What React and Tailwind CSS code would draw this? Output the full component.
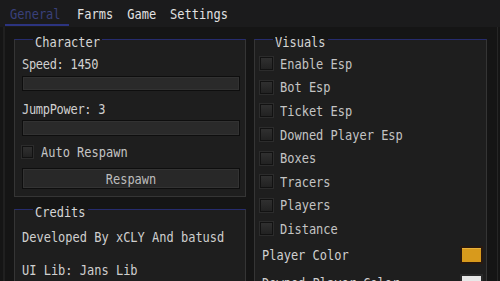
import React from "react";

const T = ({ children, className = "" }) => (
  <span className={"inline-block origin-center scale-y-[1.22] " + className}>{children}</span>
);

const Check = ({ size = "w-[13px] h-[13px]" }) => (
  <div className={size + " shrink-0 border border-[#121212] bg-[linear-gradient(#303030,#222222)] shadow-[0_0_0_1px_#2c2c2c]"} />
);

const Panel = ({ title, className = "", children }) => (
  <div className={"relative border border-[#353535] border-t-[#262c6e] bg-[#1e1e1e] " + className}>
    <div className="absolute -top-[6px] left-[18px] px-[2px] h-[16px] leading-[16px] text-[#d6d6d6] bg-[linear-gradient(to_bottom,#151515_37%,#1e1e1e_37%)]">
      <T>{title}</T>
    </div>
    {children}
  </div>
);

const Slider = ({ className = "" }) => (
  <div className={"ml-[7px] mr-[5px] border border-[#0e0e0e] bg-[#2a2a2a] shadow-[inset_0_0_0_1px_#323232] " + className} />
);

const CheckRow = ({ label }) => (
  <div className="h-[23.6px] flex items-center pl-[5px] gap-[7px]">
    <Check />
    <span className="leading-[16px] text-[#c4c4c4]"><T>{label}</T></span>
  </div>
);

export default function App() {
  return (
    <div
      className="w-[500px] h-[281px] overflow-hidden bg-[#151515] text-[12px] flex flex-col"
      style={{ fontFamily: '"DejaVu Sans Mono", monospace' }}
    >
      <div className="h-[27px] shrink-0 bg-[#1b1b1c] flex items-start relative">
        <div className="relative ml-[10px] h-full flex items-center text-[#39407a]">
          <T>General</T>
          <div className="absolute left-[-5px] right-[-8px] bottom-[1px] h-[2px] bg-[#2c3480]" />
        </div>
        <div className="ml-[16.5px] h-full flex items-center text-[#e2e2e2]"><T>Farms</T></div>
        <div className="ml-[14px] h-full flex items-center text-[#e2e2e2]"><T>Game</T></div>
        <div className="ml-[14px] h-full flex items-center text-[#e2e2e2]"><T>Settings</T></div>
      </div>
      <div className="flex-1 flex gap-[8px] ml-[3px] pl-[9px] border-l-2 border-[#202020]">
        <div className="w-[232px] flex flex-col">
          <Panel title="Character" className="mt-[12px] flex flex-col pb-[7px]">
            <div className="mt-[16px] pl-[7px] h-[16px] leading-[16px] tracking-[-0.3px] text-[#d0d0d0]"><T>Speed: 1450</T></div>
            <Slider className="mt-[4px] h-[15px]" />
            <div className="mt-[10px] pl-[7px] h-[16px] leading-[16px] tracking-[-0.3px] text-[#d0d0d0]"><T>JumpPower: 3</T></div>
            <Slider className="mt-[3px] h-[16px]" />
            <div className="mt-[8px] pl-[7px] h-[16px] flex items-center gap-[8px]">
              <Check size="w-[11px] h-[12px]" />
              <span className="leading-[16px] text-[#c4c4c4]"><T>Auto Respawn</T></span>
            </div>
            <div className="mt-[8px] ml-[7px] mr-[5px] h-[21px] flex items-center justify-center border border-[#0e0e0e] bg-[#282828] shadow-[inset_0_0_0_1px_#333333] text-[#bdbdbd]">
              <T>Respawn</T>
            </div>
          </Panel>
          <Panel title="Credits" className="mt-[12px] flex-1 flex flex-col">
            <div className="mt-[19px] pl-[7px] h-[16px] leading-[16px] text-[#cfcfcf]"><T>Developed By xCLY And batusd</T></div>
            <div className="mt-[17px] pl-[7px] h-[16px] leading-[16px] text-[#cfcfcf]"><T>UI Lib: Jans Lib</T></div>
          </Panel>
        </div>
        <div className="w-[233px] flex flex-col">
          <Panel title="Visuals" className="mt-[12px] flex-1 flex flex-col pt-[12px]">
            <CheckRow label="Enable Esp" />
            <CheckRow label="Bot Esp" />
            <CheckRow label="Ticket Esp" />
            <CheckRow label="Downed Player Esp" />
            <CheckRow label="Boxes" />
            <CheckRow label="Tracers" />
            <CheckRow label="Players" />
            <CheckRow label="Distance" />
            <div className="h-[28px] flex items-center justify-between pl-[7px] pr-[3px]">
              <span className="leading-[16px] text-[#d0d0d0]"><T>Player Color</T></span>
              <div className="w-[23px] h-[18px] border-2 border-[#2a1a10] bg-[#d89a1c] shadow-[inset_0_1px_0_#e9b23a]" />
            </div>
            <div className="h-[28px] flex items-center justify-between pl-[7px] pr-[3px]">
              <span className="leading-[16px] text-[#d0d0d0]"><T>Downed Player Color</T></span>
              <div className="w-[23px] h-[18px] border-2 border-[#2a2a2a] bg-[#e8e8e8]" />
            </div>
          </Panel>
        </div>
        <div className="flex-1 border-l border-[#262626] ml-[2px]" />
      </div>
    </div>
  );
}
